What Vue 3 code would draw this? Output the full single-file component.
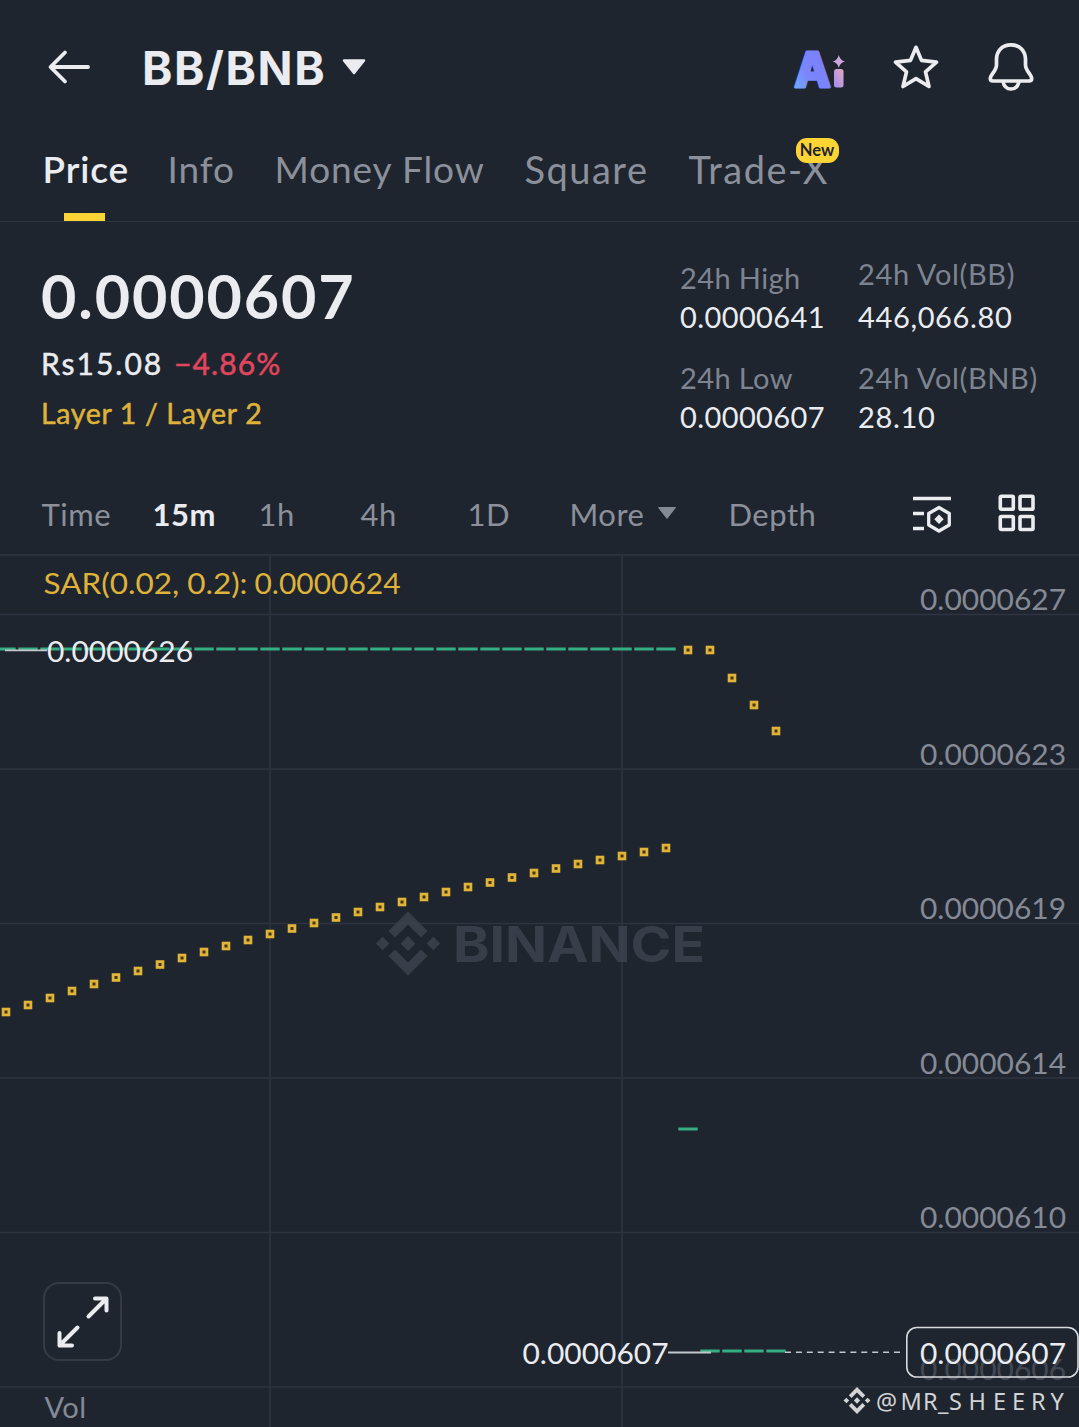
<script setup>
const tabs = [
  { label: 'Price', active: true, fit: 'price' },
  { label: 'Info', fit: 'info' },
  { label: 'Money Flow', fit: 'flow' },
  { label: 'Square', fit: 'wide' },
  { label: 'Trade-X', badge: 'New', fit: 'wide' },
]

const frames = ['Time', '15m', '1h', '4h', '1D', 'More', 'Depth']

const gridY = [614.5, 769, 923.5, 1078, 1232.5, 1387]
const gridX = [270, 622]

const axis = [
  { y: 609.5, v: '0.0000627' },
  { y: 764.5, v: '0.0000623' },
  { y: 918.5, v: '0.0000619' },
  { y: 1073.5, v: '0.0000614' },
  { y: 1227.5, v: '0.0000610' },
]

const rising = [
  1012, 1005, 998, 991, 984, 977.5, 971, 964.5, 958, 952, 946, 940, 934, 928.5, 923, 917.5,
  912, 907, 902, 897, 892, 887, 882.5, 877.5, 873, 868.5, 864, 860, 856, 852, 848,
]
const sar = [
  ...rising.map((y, i) => ({ x: 6 + i * 22, y })),
  { x: 688, y: 650 },
  { x: 710, y: 650 },
  { x: 732, y: 678 },
  { x: 754, y: 705 },
  { x: 776, y: 731 },
]

const candles = [
  ...Array.from({ length: 31 }, (_, i) => ({ x: 6 + i * 22, y: 649 })),
  { x: 688, y: 1129 },
  ...[710, 732, 754, 776].map((x) => ({ x, y: 1351 })),
]
</script>

<template>
  <main class="screen">
    <header class="top">
      <svg class="back" width="44" height="40" viewBox="0 0 44 40">
        <path d="M41 20H4M18 5.500 3.500 20 18 34.500" fill="none" stroke="#eaecef" stroke-width="3.800" stroke-linecap="round" stroke-linejoin="round" />
      </svg>
      <h1 class="pair">BB/BNB</h1>
      <svg class="caret" width="26" height="18" viewBox="0 0 26 18">
        <path d="M3 2.500h20L13 15z" fill="#eaecef" stroke="#eaecef" stroke-width="2.500" stroke-linejoin="round" />
      </svg>
      <div class="actions">
        <svg width="54" height="62" viewBox="0 0 54 62">
          <defs>
            <linearGradient id="ai" x1="0" y1="1" x2="0.7" y2="0.2">
              <stop offset="0" stop-color="#6fb4fb" />
              <stop offset="0.5" stop-color="#7a86fa" />
              <stop offset="1" stop-color="#7d80fb" />
            </linearGradient>
            <linearGradient id="dot" x1="1" y1="0" x2="0" y2="1">
              <stop offset="0" stop-color="#e6a9bd" />
              <stop offset="1" stop-color="#9f8cf5" />
            </linearGradient>
          </defs>
          <text x="3.500" y="50.500" textLength="36" lengthAdjust="spacingAndGlyphs" class="ai" fill="url(#ai)" stroke="url(#ai)">A</text>
          <rect x="43" y="33" width="9.500" height="18.500" rx="2.500" fill="url(#dot)" />
          <path d="M47.800 19Q49 24.300 54 25.500Q49 26.700 47.800 32Q46.600 26.700 41.600 25.500Q46.600 24.300 47.800 19Z" fill="#cfa6dc" />
        </svg>
        <svg width="48" height="48" viewBox="0 0 48 48">
          <path d="M24 4.300 29.500 17.400 44.500 19.200 33.500 28.900 37 43.500 24 35.700 11 43.500 14.500 28.900 3.500 19.200 18.500 17.400Z" fill="none" stroke="#eaecef" stroke-width="3.700" stroke-linejoin="round" />
        </svg>
        <svg class="bell" width="48" height="52" viewBox="0 0 48 52">
          <path d="M24 4.800C14.500 4.800 9.500 11.500 9.500 19.500V25C9.500 31 3.300 34.500 3.300 38.500Q3.300 41 6 41H42Q44.700 41 44.700 38.500C44.700 34.500 38.500 31 38.500 25V19.500C38.500 11.500 33.500 4.800 24 4.800Z" fill="none" stroke="#eaecef" stroke-width="3.700" stroke-linejoin="round" />
          <path d="M16 41.500C17 46.500 20 49 24 49S31 46.500 32 41.500" fill="none" stroke="#eaecef" stroke-width="3.700" />
        </svg>
      </div>
    </header>

    <nav class="tabs">
      <span v-for="t in tabs" :key="t.label" class="tab" :class="{ active: t.active }">
        <span :class="t.fit">{{ t.label }}</span>
        <em v-if="t.badge" class="badge">{{ t.badge }}</em>
      </span>
    </nav>

    <section class="stats">
      <div class="quote">
        <div class="last">0.0000607</div>
        <div class="fiat"><span class="rs">Rs15.08</span><span class="change">−4.86%</span></div>
        <div class="layer">Layer 1 / Layer 2</div>
      </div>
      <dl class="range">
        <dt>24h High</dt>
        <dd>0.0000641</dd>
        <dt>24h Low</dt>
        <dd>0.0000607</dd>
      </dl>
      <dl class="volume">
        <dt class="volbb">24h Vol(BB)</dt>
        <dd>446,066.80</dd>
        <dt>24h Vol(BNB)</dt>
        <dd>28.10</dd>
      </dl>
    </section>

    <nav class="frames">
      <span v-for="f in frames" :key="f" class="frame" :class="{ on: f === '15m' }">
        {{ f }}
        <svg v-if="f === 'More'" width="20" height="14" viewBox="0 0 20 14">
          <path d="M1.500 1.500h17L10 12.500z" fill="#848993" stroke="#848993" stroke-linejoin="round" />
        </svg>
      </span>
      <svg class="tool" width="42" height="40" viewBox="0 0 42 40">
        <g fill="none" stroke="#eaecef" stroke-width="3.300">
          <path d="M2 5.500H40M2 20.500H13M2 35.500H13" />
          <path d="M28 14.500 38.300 20.500V32L28 38 17.700 32V20.500Z" stroke-linejoin="round" />
        </g>
        <path d="M28 21.500 32.700 26.200 28 30.900 23.300 26.200Z" fill="#eaecef" />
      </svg>
      <svg class="tool" width="38" height="38" viewBox="0 0 38 38">
        <g fill="none" stroke="#eaecef" stroke-width="3.600">
          <rect x="2.300" y="2.300" width="13" height="13" rx="1" />
          <rect x="22" y="2.300" width="13" height="13" rx="1" />
          <rect x="2.300" y="22.500" width="13" height="13" rx="1" />
          <rect x="22" y="22.500" width="13" height="13" rx="1" />
        </g>
      </svg>
    </nav>

    <section class="chart">
      <svg class="plot" width="1079" height="871" viewBox="0 556 1079 871">
        <defs>
          <g id="mark">
            <path d="M-19.500-12.500 0-32 19.500-12.500 13-6 0-19-13-6ZM-19.500 12.500 0 32 19.500 12.500 13 6 0 19-13 6ZM-32 0-25.300-6.700-18.600 0-25.300 6.700ZM32 0 25.300-6.700 18.600 0 25.300 6.700ZM0-7.500 7.500 0 0 7.500-7.500 0Z" />
          </g>
        </defs>

        <g stroke="#2e3540" stroke-width="1.600">
          <line v-for="y in gridY" :key="y" x1="0" x2="1079" :y1="y" :y2="y" />
          <line v-for="x in gridX" :key="x" :x1="x" :x2="x" y1="556" y2="1427" />
        </g>

        <g fill="#3d434e" fill-opacity="0.85">
          <use href="#mark" x="408" y="943.500" />
          <text class="brand" x="453" y="961.500" textLength="252" lengthAdjust="spacingAndGlyphs">BINANCE</text>
        </g>

        <g class="num muted">
          <text v-for="a in axis" :key="a.v" x="920" :y="a.y" textLength="146" lengthAdjust="spacingAndGlyphs">{{ a.v }}</text>
          <text x="920" y="1379.500" textLength="146" lengthAdjust="spacingAndGlyphs" opacity="0.35">0.0000606</text>
        </g>

        <rect v-for="(c, i) in candles" :key="i" :x="c.x - 9.7" :y="c.y - 1.5" width="19.400" height="3" fill="#36ad82" />

        <g v-for="p in sar" :key="p.x">
          <rect :x="p.x - 4.3" :y="p.y - 4.3" width="8.600" height="8.600" fill="#e0b439" />
          <rect :x="p.x - 1.5" :y="p.y - 1.5" width="3" height="3" fill="#43350f" />
        </g>

        <g stroke="#c3c7ce" stroke-width="1.800">
          <path d="M5 650.300H47M668 1352.500H711" />
          <path d="M785 1352.300H903" stroke-width="1.500" stroke-dasharray="6 4.900" />
        </g>

        <text class="num sar" x="43.500" y="593.500" textLength="204" lengthAdjust="spacingAndGlyphs">SAR(0.02, 0.2):</text>
        <text class="num sar" x="254.500" y="593.500" textLength="146" lengthAdjust="spacingAndGlyphs">0.0000624</text>
        <g class="num light">
          <text x="47" y="661.500" textLength="146" lengthAdjust="spacingAndGlyphs">0.0000626</text>
          <text x="522.500" y="1363.500" textLength="146" lengthAdjust="spacingAndGlyphs">0.0000607</text>
          <text x="920" y="1363.500" textLength="146" lengthAdjust="spacingAndGlyphs">0.0000607</text>
        </g>
        <rect x="906.800" y="1327.500" width="171.200" height="49.500" rx="10" fill="none" stroke="#d7dade" stroke-width="1.600" />
        <text class="num muted" x="44.500" y="1417.500" textLength="41.500">Vol</text>

        <g fill="#d2d3d5">
          <use href="#mark" transform="translate(857 1400.500) scale(0.42)" />
          <text class="author" y="1409.500" x="876 900.500 923 938 949 968.500 993 1012 1031 1050.500">@MR_SHEERY</text>
        </g>
      </svg>

      <button class="expand" aria-label="Expand">
        <svg width="56" height="56" viewBox="0 0 56 56">
          <path d="M33.500 22.500 51 5M40 4.500H51.500V16.500M22.500 33.500 4.500 51.500M4.500 39V51.500H17" fill="none" stroke="#eaecef" stroke-width="4" stroke-linecap="round" stroke-linejoin="round" />
        </svg>
      </button>
    </section>
  </main>
</template>

<style>
body {
  margin: 0;
  background: #1f252f;
}
</style>

<style scoped>
.screen {
  width: 1079px;
  height: 1427px;
  overflow: hidden;
  background: #1f252f;
  color: #eaecef;
  font-family: Lato, "Liberation Sans", sans-serif;
  white-space: nowrap;
}
svg {
  display: block;
  flex: none;
}
.top {
  display: flex;
  align-items: center;
  height: 134px;
  box-sizing: border-box;
  padding: 0 44px 0 47px;
}
.pair {
  margin: 2px 0 0 51px;
  width: 199px;
  font: 700 46px/54px Inter, sans-serif;
  letter-spacing: 1.6px;
}
.actions {
  display: flex;
  align-items: center;
  gap: 47px;
  margin-left: auto;
}
.bell {
  margin-top: -2px;
}
.ai {
  font: 800 48px Inter, sans-serif;
  stroke-width: 3px;
  stroke-linejoin: round;
}
.tabs {
  display: grid;
  grid-template-columns: 125px 107px 250px 164px auto;
  height: 88px;
  box-sizing: border-box;
  padding-left: 43px;
  border-bottom: 1.5px solid #2d343f;
  font-size: 37px;
  line-height: 70px;
  color: #8b909a;
}
.price,
.info,
.flow {
  letter-spacing: 0.9px;
}
.wide {
  font-size: 38px;
  letter-spacing: 1.5px;
}
.tab {
  position: relative;
  left: -0.5px;
}
.active {
  color: #eaecef;
  font-weight: 600;
}
.active::after {
  content: "";
  position: absolute;
  left: 21.5px;
  bottom: 0;
  width: 41px;
  height: 8px;
  background: #fcd535;
}
.badge {
  position: absolute;
  left: 107px;
  top: 4px;
  width: 43px;
  height: 25px;
  border-radius: 11px;
  background: #fcd535;
  color: #1f252f;
  font: 700 16.5px/25px Lato, sans-serif;
  text-align: center;
}
.stats {
  display: flex;
  height: 253px;
  box-sizing: border-box;
  padding: 0 0 0 41px;
}
.quote {
  width: 639px;
  padding-top: 39px;
}
.last {
  font-size: 61px;
  line-height: 70px;
  font-weight: 700;
  letter-spacing: 1.9px;
}
.fiat {
  display: flex;
  margin-top: 12px;
  font-size: 30px;
  line-height: 40px;
  -webkit-text-stroke: 0.5px currentColor;
}
.rs {
  width: 133px;
  letter-spacing: 2px;
}
.change {
  color: #e0465e;
  letter-spacing: 1.1px;
}
.layer {
  margin-top: 10px;
  color: #dfb23a;
  font-size: 28.5px;
  line-height: 40px;
  letter-spacing: 0.65px;
  -webkit-text-stroke: 0.5px currentColor;
}
dl {
  margin: 0;
  padding-top: 36px;
  font-size: 29px;
  line-height: 39px;
}
.range {
  width: 178px;
  letter-spacing: 0.4px;
}
.volume {
  padding-top: 32px;
  letter-spacing: 0.65px;
}
dt {
  color: #7e848f;
}
dd {
  margin: 0 0 22px;
}
.volbb {
  margin-bottom: 4px;
}
.frames {
  display: grid;
  grid-template-columns: 111px 106px 102px 107px 102px 159px 182px 87px auto;
  align-items: center;
  height: 81px;
  box-sizing: border-box;
  padding: 0 0 1px 41.5px;
  border-bottom: 2px solid #2b323d;
  font-size: 31px;
  color: #8b909a;
}
.frame {
  display: flex;
  align-items: center;
  gap: 12px;
  letter-spacing: 0.5px;
}
.frame svg {
  margin: -3px 0 0 1px;
}
.tool {
  margin-top: -2px;
}
.on {
  color: #eaecef;
  font-weight: 700;
}
.chart {
  position: relative;
}
.num {
  font-family: Lato, "Liberation Sans", sans-serif;
  font-size: 29px;
}
.muted {
  fill: #858a95;
}
.light {
  fill: #eaecef;
}
.sar {
  fill: #dfb23a;
}
.brand {
  font: 700 49px Inter, sans-serif;
}
.author {
  font: 400 23.5px "Noto Sans", sans-serif;
}
.expand {
  position: absolute;
  left: 43px;
  top: 726px;
  display: grid;
  place-items: center;
  width: 79px;
  height: 79px;
  padding: 0;
  border: 2px solid #343b46;
  border-radius: 16px;
  background: #1f252f;
}
</style>
